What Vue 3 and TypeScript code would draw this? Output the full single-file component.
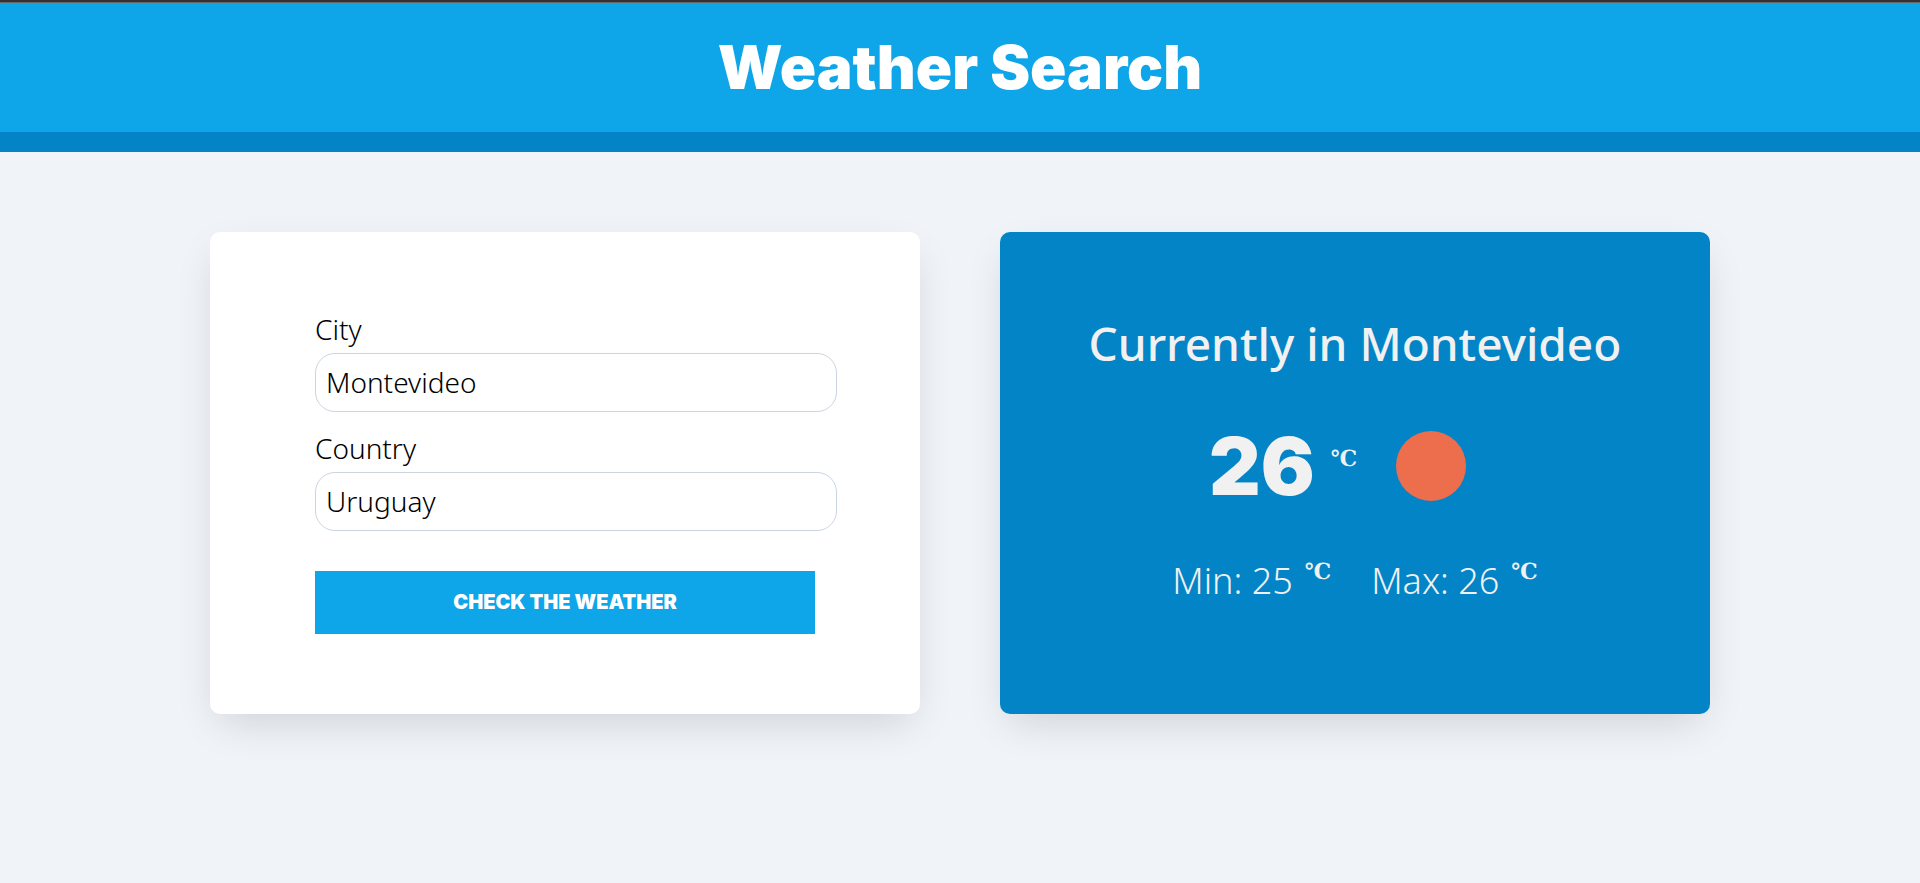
<script setup lang="ts">
import { ref } from 'vue'

interface Weather {
  city: string
  current: number
  min: number
  max: number
}

const city = ref('Montevideo')
const country = ref('Uruguay')
const weather = ref<Weather>({ city: 'Montevideo', current: 26, min: 25, max: 26 })

function checkWeather(): void {
  weather.value = { ...weather.value, city: city.value.trim() || weather.value.city }
}
</script>

<template>
  <div class="page">
    <header class="header">
      <h1>Weather Search</h1>
    </header>
    <main class="grid">
      <section class="card">
        <form class="form" @submit.prevent="checkWeather">
          <div class="field">
            <label for="city">City</label>
            <input id="city" v-model="city" type="text" name="city" />
          </div>
          <div class="field">
            <label for="country">Country</label>
            <input id="country" v-model="country" type="text" name="country" />
          </div>
          <button class="submit" type="submit">Check the weather</button>
        </form>
      </section>
      <section class="card result">
        <h2>Currently in {{ weather.city }}</h2>
        <div class="current">
          <p class="degrees">{{ weather.current }}<span class="unit">℃</span></p>
          <svg class="sun" viewBox="0 0 100 100" role="img" aria-label="Clear sky">
            <circle cx="50" cy="50" r="35" fill="#ec6e4c" />
          </svg>
        </div>
        <div class="range">
          <p>Min: {{ weather.min }}<span class="unit">℃</span></p>
          <p>Max: {{ weather.max }}<span class="unit">℃</span></p>
        </div>
      </section>
    </main>
  </div>
</template>

<style>
body {
  margin: 0;
  background: #f0f4f9;
}
</style>

<style scoped>
.page {
  min-height: 100vh;
  box-sizing: border-box;
  border-top: 2px solid #333333;
  background: #f0f4f9;
  color: #000000;
  font-family: "Noto Sans", "Open Sans", sans-serif;
  font-size: 28px;
  font-weight: 300;
}

.header {
  padding: 32px 20px;
  border-top: 1px solid #66686b;
  border-bottom: 20px solid #0284c7;
  background: #0ea5e9;
}

h1 {
  margin: 0;
  color: #ffffff;
  font-family: Inter, sans-serif;
  font-size: 60px;
  font-weight: 900;
  line-height: 65px;
  text-align: center;
}

.grid {
  display: grid;
  grid-template-columns: repeat(auto-fit, minmax(min(100%, 600px), 1fr));
  gap: 80px;
  max-width: 1500px;
  margin: 80px auto;
}

.card {
  padding: 81px 40px 80px;
  border-radius: 10px;
  background: #ffffff;
  box-shadow: 0 15px 40px -10px rgba(0, 0, 0, 0.16);
}

.form {
  max-width: 500px;
  margin: 0 auto;
}

.field {
  margin-bottom: 20px;
}

label {
  display: block;
  margin-bottom: 8px;
  line-height: 32px;
}

input {
  box-sizing: content-box;
  width: 100%;
  height: 37px;
  padding: 10px;
  border: 1px solid #cbd5e1;
  border-radius: 20px;
  background: #ffffff;
  color: inherit;
  font: inherit;
  line-height: 37px;
}

.submit {
  display: block;
  width: 100%;
  height: 63px;
  margin-top: 40px;
  padding: 0 0 2px;
  border: 0;
  background: #0ea5e9;
  color: #ffffff;
  font-family: Inter, sans-serif;
  font-size: 20px;
  font-weight: 900;
  text-transform: uppercase;
  cursor: pointer;
}

.result {
  background: #0284c7;
  color: #f1f1f1;
  text-align: center;
}

h2 {
  margin: 0;
  font-size: 46px;
  font-weight: 500;
  line-height: 60px;
}

.current {
  display: flex;
  align-items: center;
  justify-content: center;
  gap: 24px;
  margin-top: 43px;
  padding-right: 20px;
}

p {
  display: flex;
  align-items: center;
  margin: 0;
}

.degrees {
  font-family: Inter, sans-serif;
  font-size: 80px;
  font-weight: 900;
  line-height: 100px;
}

.unit {
  padding: 0 0 16px 16px;
  font-family: "DejaVu Serif", serif;
  font-size: 22px;
  font-weight: 700;
  line-height: 28px;
}

.sun {
  width: 100px;
  height: 100px;
}

.range {
  display: flex;
  justify-content: center;
  gap: 40px;
  margin-top: 40px;
  font-size: 36px;
  line-height: 50px;
}

.range .unit {
  padding: 0 0 20px 12px;
}
</style>
